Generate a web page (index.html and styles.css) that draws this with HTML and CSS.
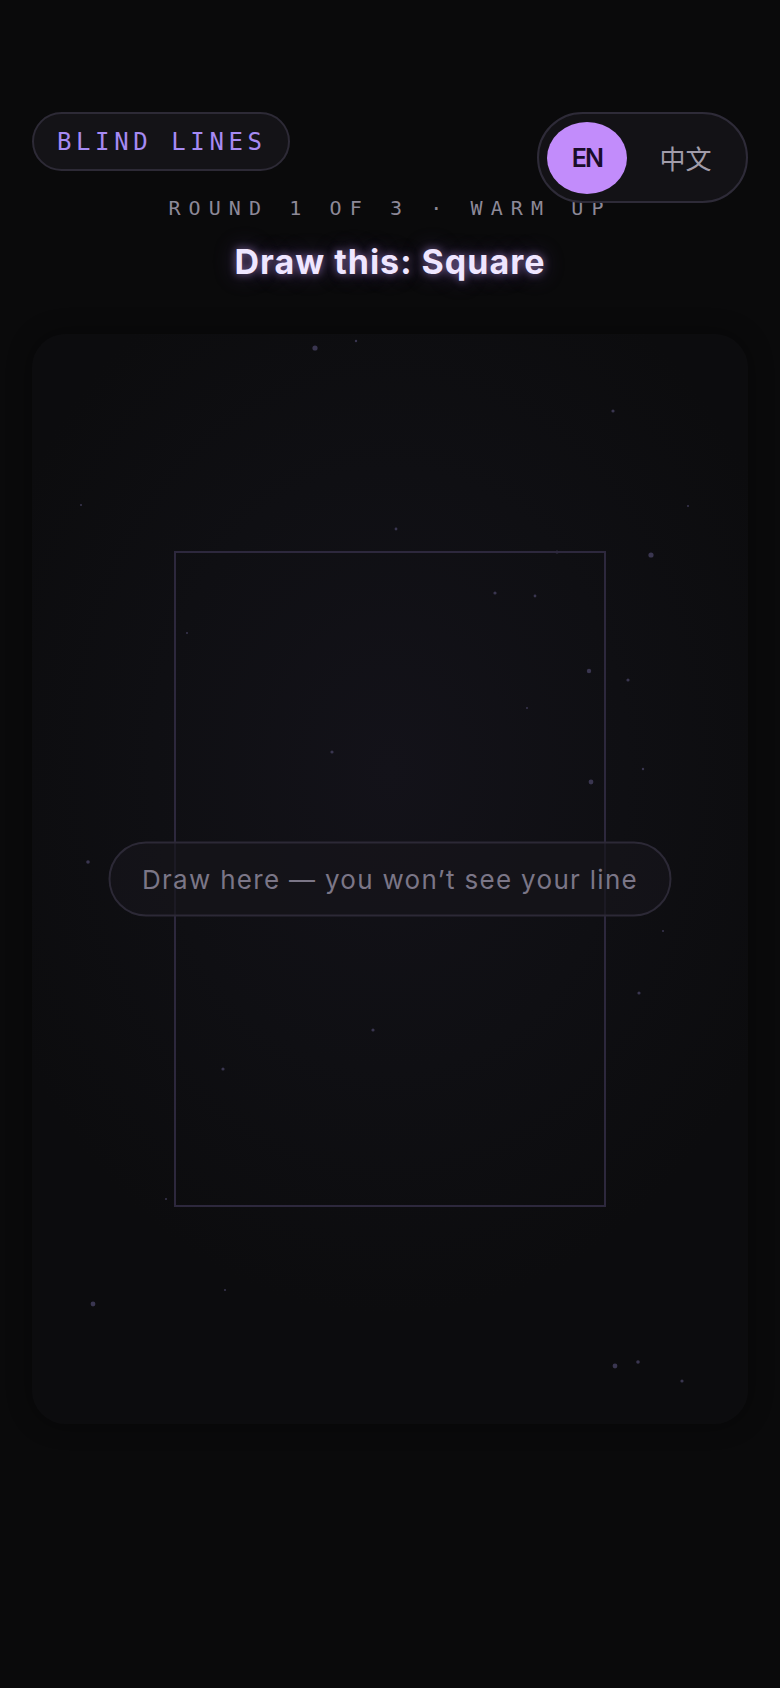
FILE: index.html
```html
<!DOCTYPE html>
<html lang="en">
<head>
<meta charset="utf-8">
<title>Blind Lines</title>
<link rel="stylesheet" href="styles.css">
</head>
<body>
<div class="app">
  <header class="header">
    <div class="brand">BLIND LINES</div>
    <div class="lang">
      <button class="lang-btn active">EN</button>
      <button class="lang-btn zh">中文</button>
    </div>
  </header>
  <div class="round">ROUND 1 OF 3 · WARM UP</div>
  <h1 class="title">Draw this: Square</h1>
  <main class="canvas">
    <svg class="stars" viewBox="0 0 716 1090" preserveAspectRatio="none">
      <g fill="#3a3650">
        <circle cx="283" cy="14" r="2.6"/>
        <circle cx="324" cy="7" r="1.2"/>
        <circle cx="581" cy="77" r="1.6"/>
        <circle cx="49" cy="171" r="1"/>
        <circle cx="656" cy="172" r="1"/>
        <circle cx="364" cy="195" r="1.4"/>
        <circle cx="525" cy="218" r="1.6"/>
        <circle cx="619" cy="221" r="2.6"/>
        <circle cx="463" cy="259" r="1.6"/>
        <circle cx="503" cy="262" r="1.4"/>
        <circle cx="155" cy="299" r="1"/>
        <circle cx="557" cy="337" r="2.2"/>
        <circle cx="596" cy="346" r="1.6"/>
        <circle cx="300" cy="418" r="1.6"/>
        <circle cx="611" cy="435" r="1.2"/>
        <circle cx="559" cy="448" r="2.4"/>
        <circle cx="495" cy="374" r="1"/>
        <circle cx="56" cy="528" r="1.8"/>
        <circle cx="631" cy="597" r="1"/>
        <circle cx="607" cy="659" r="1.6"/>
        <circle cx="341" cy="696" r="1.6"/>
        <circle cx="191" cy="735" r="1.6"/>
        <circle cx="134" cy="865" r="1"/>
        <circle cx="61" cy="970" r="2.4"/>
        <circle cx="193" cy="956" r="1"/>
        <circle cx="583" cy="1032" r="2.4"/>
        <circle cx="606" cy="1028" r="1.8"/>
        <circle cx="650" cy="1047" r="1.6"/>
      </g>
    </svg>
    <div class="target"></div>
    <div class="hint">Draw here — you won’t see your line</div>
  </main>
</div>
</body>
</html>
```

FILE: styles.css
```css
* { box-sizing: border-box; }

html, body {
  margin: 0;
  padding: 0;
  background: #0a0a0b;
}

body {
  min-height: 1688px;
  font-family: "Inter", "Liberation Sans", sans-serif;
  color: #e8e4f0;
}

.app {
  position: relative;
  padding: 112px 32px 0;
  display: flex;
  flex-direction: column;
  align-items: center;
}

.header {
  align-self: stretch;
  display: flex;
  justify-content: flex-start;
}

.brand {
  height: 59px;
  display: inline-flex;
  align-items: center;
  padding: 0 21px 0 23px;
  border: 2px solid #2d2a36;
  border-radius: 999px;
  background: #141317;
  font-family: "DejaVu Sans Mono", "Liberation Mono", monospace;
  font-size: 24px;
  letter-spacing: 4.6px;
  color: #a68af3;
}

.lang {
  position: absolute;
  top: 112px;
  right: 32px;
  width: 211px;
  height: 91px;
  padding: 8px;
  display: flex;
  gap: 6px;
  align-items: center;
  border: 2px solid #2e2b38;
  border-radius: 999px;
  background: #131216;
  z-index: 2;
}

.lang-btn {
  border: none;
  background: transparent;
  padding: 0;
  margin: 0;
  height: 72px;
  display: flex;
  align-items: center;
  justify-content: center;
  font-family: "Noto Sans CJK SC", "Noto Sans", sans-serif;
  font-size: 26px;
  color: #a19ca9;
}

.lang-btn.active {
  width: 80px;
  flex: none;
  border-radius: 50%;
  background: #c28cfb;
  color: #1a0d29;
  font-family: "Inter", "Liberation Sans", sans-serif;
  font-weight: 600;
  font-size: 25px;
  letter-spacing: -1.8px;
}

.lang-btn.zh {
  flex: 1;
}

.round {
  margin-top: 25px;
  font-family: "DejaVu Sans Mono", "Liberation Mono", monospace;
  font-size: 20px;
  line-height: 24px;
  letter-spacing: 8.1px;
  color: #8d8998;
}

.title {
  margin: 22px 0 0;
  font-family: "Inter", "Liberation Sans", sans-serif;
  font-weight: 700;
  font-size: 34px;
  line-height: 40px;
  letter-spacing: 1px;
  color: #efe6ff;
  text-shadow: 0 0 8px rgba(205, 165, 255, 0.55), 0 0 22px rgba(160, 110, 240, 0.35);
}

.canvas {
  position: relative;
  margin-top: 52px;
  align-self: stretch;
  height: 1090px;
  border-radius: 34px;
  background: radial-gradient(ellipse 60% 50% at 50% 40%, #131219 0%, #0f0f13 55%, #0c0c0e 100%);
  box-shadow: 0 0 24px rgba(0, 0, 0, 0.4);
  display: flex;
  align-items: center;
  justify-content: center;
  overflow: hidden;
}

.stars {
  position: absolute;
  inset: 0;
  width: 100%;
  height: 100%;
}

.target {
  width: 432px;
  height: 656px;
  border: 2.5px solid #2d283d;
  position: relative;
}

.hint {
  position: absolute;
  left: 50%;
  top: 50%;
  transform: translate(-50%, -50%);
  width: 563px;
  height: 75px;
  display: flex;
  align-items: center;
  justify-content: center;
  border: 2px solid #2c2936;
  border-radius: 999px;
  background: rgba(22, 21, 27, 0.72);
  font-family: "Inter", "Liberation Sans", sans-serif;
  font-size: 26px;
  letter-spacing: 1.3px;
  color: #7b7687;
  white-space: nowrap;
}
```
